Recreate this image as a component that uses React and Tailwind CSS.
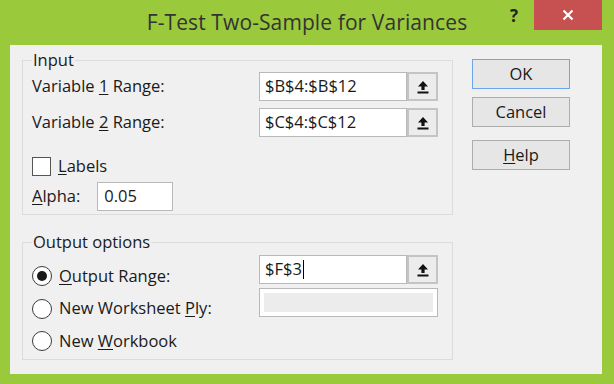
import React from "react";

const font = { fontFamily: '"Open Sans", "Noto Sans", Arial, sans-serif' };

function RefIcon() {
  return (
    <svg width="12" height="14" viewBox="0 0 12 14">
      <path d="M6 1 L11 6.5 L7.6 6.5 L7.6 10 L4.4 10 L4.4 6.5 L1 6.5 Z" fill="#111" />
      <rect x="0.5" y="11.5" width="11" height="2" fill="#111" />
    </svg>
  );
}

function RangeBox({ value, caret }) {
  return (
    <div className="flex h-[29px] w-[179px]">
      <div className="flex-1 flex items-center bg-white border border-[#b9b9b9] pl-[5px] text-[#1a1a1a]">
        {value}
        {caret && <span className="ml-[1px] h-[19px] w-px bg-black"></span>}
      </div>
      <div className="w-[31px] flex items-center justify-center bg-[#ececec] border-2 border-[#c4c4c4]">
        <RefIcon />
      </div>
    </div>
  );
}

function Radio({ checked }) {
  return (
    <div className="h-[20px] w-[20px] rounded-full border border-[#3a3a3a] bg-white flex items-center justify-center">
      {checked && <div className="h-[10px] w-[10px] rounded-full bg-[#1a1a1a]"></div>}
    </div>
  );
}

function DlgButton({ children, focused }) {
  return (
    <div
      className={
        "h-[30px] w-[98px] flex items-center justify-center text-[#1a1a1a] bg-[#e6e6e6] border " +
        (focused ? "border-[#6aa6e8]" : "border-[#adadad]")
      }
    >
      {children}
    </div>
  );
}

export default function App() {
  return (
    <div className="w-[614px] h-[384px] bg-[#9bc93c] flex flex-col" style={font}>
      {/* title bar */}
      <div className="relative h-[45px] flex justify-center">
        <span className="mt-[7px] text-[21px] text-[#333333] tracking-[0.1px]">
          F-Test Two-Sample for Variances
        </span>
        <span className="absolute left-[510px] top-[3px] text-[17px] font-bold text-[#222]">?</span>
        <div className="absolute left-[534px] top-0 w-[68px] h-[30px] bg-[#c75050] flex items-center justify-center">
          <svg width="12" height="12" viewBox="0 0 12 12">
            <path d="M1.5 1.5 L10.5 10.5 M10.5 1.5 L1.5 10.5" stroke="#fff" strokeWidth="2.2" />
          </svg>
        </div>
      </div>

      {/* body */}
      <div className="ml-[10px] w-[592px] h-[329px] bg-[#f0f0f0] flex text-[16.5px] text-[#1a1a1a]">
        <div className="ml-[12px] w-[431px] flex flex-col">
          <fieldset className="mt-[5px] h-[165px] border border-[#dcdcdc] px-[9px]">
            <legend className="px-[1px] leading-[20px]">Input</legend>
            <div className="mt-[2px] flex items-center justify-between h-[29px] pr-[5px]">
              <span>
                Variable <u className="underline-offset-2">1</u> Range:
              </span>
              <RangeBox value="$B$4:$B$12" />
            </div>
            <div className="mt-[7px] flex items-center justify-between h-[29px] pr-[5px]">
              <span>
                Variable <u className="underline-offset-2">2</u> Range:
              </span>
              <RangeBox value="$C$4:$C$12" />
            </div>
            <div className="mt-[17px] flex items-center gap-[7px]">
              <div className="h-[19px] w-[19px] border border-[#555] bg-white"></div>
              <span>
                <u className="underline-offset-2">L</u>abels
              </span>
            </div>
            <div className="mt-[3px] flex items-center gap-[17px]">
              <span>
                <u className="underline-offset-2">A</u>lpha:
              </span>
              <div className="h-[29px] w-[76px] bg-white border border-[#b9b9b9] flex items-center pl-[6px]">
                0.05
              </div>
            </div>
          </fieldset>

          <fieldset className="mt-[17px] h-[128px] border border-[#dcdcdc] px-[9px]">
            <legend className="px-[1px] leading-[20px]">Output options</legend>
            <div className="flex justify-between pr-[5px]">
              <div className="mt-[8px] flex flex-col">
                <div className="h-[32px] flex items-center gap-[7px]">
                  <Radio checked />
                  <span>
                    <u className="underline-offset-2">O</u>utput Range:
                  </span>
                </div>
                <div className="h-[33px] flex items-center gap-[7px]">
                  <Radio />
                  <span>
                    New Worksheet <u className="underline-offset-2">P</u>ly:
                  </span>
                </div>
                <div className="h-[32px] flex items-center gap-[7px]">
                  <Radio />
                  <span>
                    New <u className="underline-offset-2">W</u>orkbook
                  </span>
                </div>
              </div>
              <div className="mt-[3px] flex flex-col gap-[4px]">
                <RangeBox value="$F$3" caret />
                <div className="h-[29px] w-[179px] border border-[#b9b9b9] bg-white p-[4px]">
                  <div className="h-full w-full bg-[#ececec]"></div>
                </div>
              </div>
            </div>
          </fieldset>
        </div>

        <div className="ml-[19px] mt-[14px] flex flex-col">
          <DlgButton focused>OK</DlgButton>
          <div className="mt-[8px]">
            <DlgButton>Cancel</DlgButton>
          </div>
          <div className="mt-[13px]">
            <DlgButton>
              <span>
                <u className="underline-offset-2">H</u>elp
              </span>
            </DlgButton>
          </div>
        </div>
      </div>
    </div>
  );
}
